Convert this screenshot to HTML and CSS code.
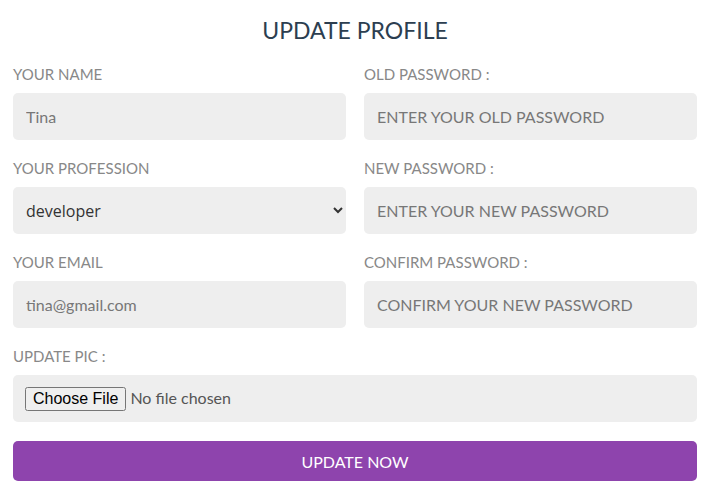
FILE: index.html
```html
<!DOCTYPE html>
<html>
<head>
<meta charset="utf-8">
<link rel="stylesheet" href="styles.css">
</head>
<body>
<form class="profile">
  <h1 class="title">UPDATE PROFILE</h1>
  <div class="grid">
    <div class="field">
      <label class="label">YOUR NAME</label>
      <input class="input" type="text" value="Tina">
    </div>
    <div class="field">
      <label class="label">OLD PASSWORD :</label>
      <input class="input" type="password" placeholder="ENTER YOUR OLD PASSWORD">
    </div>
    <div class="field">
      <label class="label">YOUR PROFESSION</label>
      <select class="input select">
        <option>developer</option>
      </select>
    </div>
    <div class="field">
      <label class="label">NEW PASSWORD :</label>
      <input class="input" type="password" placeholder="ENTER YOUR NEW PASSWORD">
    </div>
    <div class="field">
      <label class="label">YOUR EMAIL</label>
      <input class="input" type="email" value="tina@gmail.com">
    </div>
    <div class="field">
      <label class="label">CONFIRM PASSWORD :</label>
      <input class="input" type="password" placeholder="CONFIRM YOUR NEW PASSWORD">
    </div>
    <div class="field wide">
      <label class="label">UPDATE PIC :</label>
      <div class="filebox">
        <input class="file" type="file">
      </div>
    </div>
  </div>
  <button class="btn" type="button">UPDATE NOW</button>
</form>
</body>
</html>
```
FILE: styles.css
```css
* { box-sizing: border-box; }
body {
  margin: 0;
  background: #fff;
  font-family: Lato, "Noto Sans", sans-serif;
}
.profile {
  padding: 0 11px 0 13px;
}
.title {
  margin: 12px 0 16px;
  font-size: 23px;
  line-height: 36px;
  font-weight: 400;
  text-align: center;
  color: #2c3e50;
}
.grid {
  display: grid;
  grid-template-columns: 1fr 1fr;
  column-gap: 18px;
  row-gap: 18px;
}
.field {
  display: flex;
  flex-direction: column;
}
.wide { grid-column: 1 / 3; }
.label {
  font-size: 15px;
  line-height: 20px;
  color: #888;
  margin-bottom: 9px;
}
.input {
  height: 47px;
  border: none;
  border-radius: 5px;
  background: #eee;
  padding: 0 13px;
  font-family: inherit;
  font-size: 16px;
  color: #777;
  outline: none;
}
.input::placeholder { color: #777; }
.select {
  color: #333;
  font-family: "Open Sans", sans-serif;
  padding: 0 8px 0 9px;
}
.filebox {
  height: 47px;
  border-radius: 5px;
  background: #eee;
  padding: 0 12px;
  display: flex;
  align-items: center;
}
.file {
  font-family: inherit;
  font-size: 16px;
  color: #555;
}
.file::file-selector-button {
  font-family: Arial, "Liberation Sans", sans-serif;
  font-size: 16px;
  margin-right: 4px;
}
.btn {
  display: block;
  width: 100%;
  margin-top: 19px;
  height: 40px;
  border: none;
  border-radius: 5px;
  background: #8e44ad;
  color: #fff;
  font-family: inherit;
  font-size: 16px;
}
```
